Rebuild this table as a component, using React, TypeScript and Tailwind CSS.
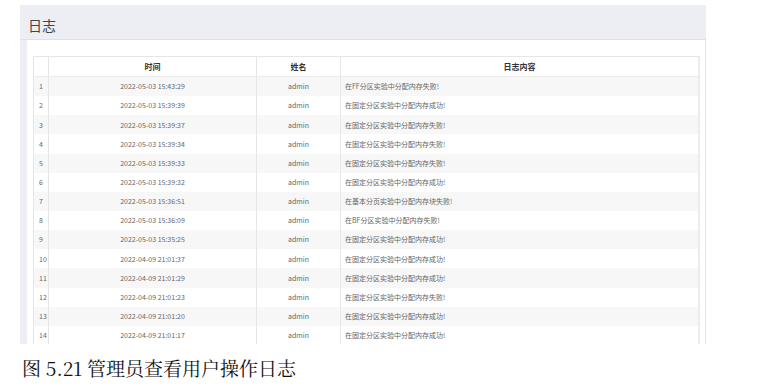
type LogRow = {
  id: number;
  time: string;
  name: string;
  content: string;
};

const rows: LogRow[] = [
  { id: 1, time: "2022-05-03 15:43:29", name: "admin", content: "在FF分区实验中分配内存失败!" },
  { id: 2, time: "2022-05-03 15:39:39", name: "admin", content: "在固定分区实验中分配内存成功!" },
  { id: 3, time: "2022-05-03 15:39:37", name: "admin", content: "在固定分区实验中分配内存失败!" },
  { id: 4, time: "2022-05-03 15:39:34", name: "admin", content: "在固定分区实验中分配内存失败!" },
  { id: 5, time: "2022-05-03 15:39:33", name: "admin", content: "在固定分区实验中分配内存失败!" },
  { id: 6, time: "2022-05-03 15:39:32", name: "admin", content: "在固定分区实验中分配内存成功!" },
  { id: 7, time: "2022-05-03 15:36:51", name: "admin", content: "在基本分页实验中分配内存块失败!" },
  { id: 8, time: "2022-05-03 15:36:09", name: "admin", content: "在BF分区实验中分配内存失败!" },
  { id: 9, time: "2022-05-03 15:35:25", name: "admin", content: "在固定分区实验中分配内存成功!" },
  { id: 10, time: "2022-04-09 21:01:37", name: "admin", content: "在固定分区实验中分配内存成功!" },
  { id: 11, time: "2022-04-09 21:01:29", name: "admin", content: "在固定分区实验中分配内存成功!" },
  { id: 12, time: "2022-04-09 21:01:23", name: "admin", content: "在固定分区实验中分配内存失败!" },
  { id: 13, time: "2022-04-09 21:01:20", name: "admin", content: "在固定分区实验中分配内存成功!" },
  { id: 14, time: "2022-04-09 21:01:17", name: "admin", content: "在固定分区实验中分配内存成功!" },
];

const sans = "font-['Noto_Sans_CJK_SC','Noto_Sans',sans-serif]";

function LogTable() {
  return (
    <div className="border border-[#e6e6e6] border-r-2 border-r-[#ececec]">
      <div className="grid grid-cols-[15px_208px_84px_1fr] h-[20px] border-b border-[#ececec] bg-white text-[8px] font-bold text-[#333]">
        <div className="border-r border-[#e6e6e6]" />
        <div className="flex items-center justify-center border-r border-[#e6e6e6]">时间</div>
        <div className="flex items-center justify-center border-r border-[#e6e6e6]">姓名</div>
        <div className="flex items-center justify-center">日志内容</div>
      </div>
      {rows.map((row) => (
        <div
          key={row.id}
          className={
            "grid grid-cols-[15px_208px_84px_1fr] h-[19.15px] text-[7px] text-[#666] " +
            (row.id % 2 === 1 ? "bg-[#f7f7f7]" : "bg-white")
          }
        >
          <div className="flex items-center pl-[5px] border-r border-[#e6e6e6]">{row.id}</div>
          <div className="flex items-center justify-center border-r border-[#e6e6e6]">{row.time}</div>
          <div className="flex items-center justify-center border-r border-[#e6e6e6]">{row.name}</div>
          <div className="flex items-center pl-[4px]">{row.content}</div>
        </div>
      ))}
    </div>
  );
}

export default function App() {
  return (
    <div className="w-[764px] h-[387px] bg-white overflow-hidden relative">
      <div className={`ml-[20px] mt-[5px] w-[686px] h-[339px] bg-[#eceef3] flex flex-col overflow-hidden ${sans}`}>
        <div className="h-[35px] flex items-center pl-[8px] pt-[5px] border-b border-[#dde0e8]">
          <h2 className="text-[14px] text-[#444] leading-none">日志</h2>
        </div>
        <div className="flex-1 ml-[7px] bg-white border-r border-[#e8e8e8] pt-[16px] pl-[6px] pr-[5px] overflow-hidden">
          <LogTable />
        </div>
      </div>
      <p className="pl-[22px] pt-[14px] text-[19px] leading-none text-[#111] font-['Noto_Serif_CJK_SC','Liberation_Serif','Noto_Sans_CJK_SC',serif]">
        图 5.21 管理员查看用户操作日志
      </p>
    </div>
  );
}
